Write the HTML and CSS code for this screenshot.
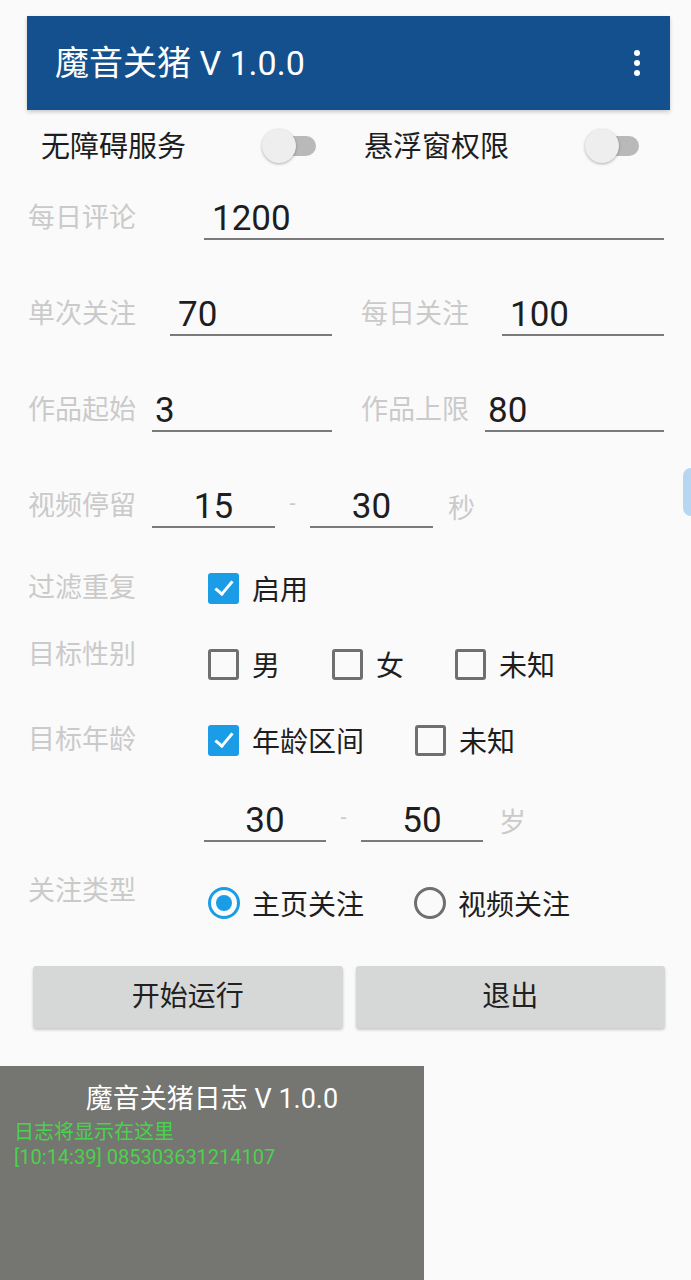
FILE: index.html
```html
<!DOCTYPE html>
<html lang="zh">

<head>
    <meta charset="UTF-8">
    <meta name="viewport" content="width=device-width, initial-scale=1.0">
    <title>魔音关猪</title>
    <link rel="stylesheet" href="styles.css">
</head>

<body>
    <div class="toolbar">
        <span class="title">魔音关猪 V 1.0.0</span>
        <span class="menu"><i></i><i></i><i></i></span>
    </div>

    <div class="switch-row">
        <span class="switch-label">无障碍服务</span>
        <span class="switch"><span class="thumb"></span></span>
        <span class="switch-label second">悬浮窗权限</span>
        <span class="switch"><span class="thumb"></span></span>
    </div>

    <div class="row row-comment">
        <span class="label w176">每日评论</span>
        <span class="field grow">1200</span>
    </div>

    <div class="row row-input">
        <span class="label w142">单次关注</span>
        <span class="field w162">70</span>
        <span class="label second w141">每日关注</span>
        <span class="field w162">100</span>
    </div>

    <div class="row row-input">
        <span class="label w124">作品起始</span>
        <span class="field w180 tight">3</span>
        <span class="label second w124">作品上限</span>
        <span class="field w179 tight">80</span>
    </div>

    <div class="row row-input">
        <span class="label w124">视频停留</span>
        <span class="field short center">15</span>
        <span class="dash">-</span>
        <span class="field short center">30</span>
        <span class="unit">秒</span>
    </div>

    <div class="row row-check r-filter">
        <span class="label w180">过滤重复</span>
        <span class="check-item"><span class="box checked"></span>启用</span>
    </div>

    <div class="row row-check r-gender">
        <span class="label w180 up">目标性别</span>
        <span class="check-item w124"><span class="box"></span>男</span>
        <span class="check-item w123"><span class="box"></span>女</span>
        <span class="check-item"><span class="box"></span>未知</span>
    </div>

    <div class="row row-check r-age">
        <span class="label w180">目标年龄</span>
        <span class="check-item w207"><span class="box checked"></span>年龄区间</span>
        <span class="check-item"><span class="box"></span>未知</span>
    </div>

    <div class="row r-range">
        <span class="field short center">30</span>
        <span class="dash">-</span>
        <span class="field short center">50</span>
        <span class="unit">岁</span>
    </div>

    <div class="row row-check r-type">
        <span class="label w180 up">关注类型</span>
        <span class="check-item w206"><span class="radio on"></span>主页关注</span>
        <span class="check-item"><span class="radio"></span>视频关注</span>
    </div>

    <div class="buttons">
        <div class="btn">开始运行</div>
        <div class="btn">退出</div>
    </div>

    <div class="log">
        <div class="log-title">魔音关猪日志 V 1.0.0</div>
        <div class="log-line">日志将显示在这里</div>
        <div class="log-line">[10:14:39] 085303631214107</div>
    </div>

    <!-- floating bubble at the screen edge -->
    <div class="bubble"></div>
</body>

</html>
```

FILE: styles.css
```css
body {
    margin: 0;
    padding: 0;
    width: 691px;
    height: 1280px;
    background-color: #fafafa;
    font-family: 'Roboto', 'Noto Sans CJK SC', sans-serif;
    color: #212121;
    position: relative;
    overflow: hidden;
}

/* Toolbar */
.toolbar {
    display: flex;
    align-items: center;
    justify-content: space-between;
    height: 94px;
    margin: 16px 21px 0 27px;
    padding: 0 30px 0 28px;
    background-color: #13508d;
    color: white;
    box-shadow: 0 2px 4px rgba(0, 0, 0, 0.2);
}

.title {
    font-size: 34px;
    line-height: 40px;
}

.menu {
    display: flex;
    flex-direction: column;
    gap: 4px;
}

.menu i {
    display: block;
    width: 6px;
    height: 6px;
    border-radius: 50%;
    background-color: white;
}

/* Switch row */
.switch-row {
    display: flex;
    align-items: center;
    height: 72px;
    padding-left: 41px;
}

.switch-label {
    width: 221px;
    margin-top: -4px;
    font-size: 29px;
    color: #1e1e1e;
}

.switch-label.second {
    margin-left: 48px;
}

.switch {
    position: relative;
    width: 54px;
    height: 20px;
}

.switch::before {
    content: "";
    position: absolute;
    left: 6px;
    right: 0;
    top: 0;
    height: 20px;
    border-radius: 10px;
    background-color: #b9b9b9;
}

.thumb {
    position: absolute;
    left: 0;
    top: -7px;
    width: 34px;
    height: 34px;
    border-radius: 50%;
    background-color: #eeeeee;
    box-shadow: 0 1px 3px rgba(0, 0, 0, 0.3);
}

/* Form rows */
.row {
    display: flex;
    align-items: center;
    padding-left: 28px;
}

.row-comment {
    height: 72px;
    margin-bottom: 12px;
}

.row-input {
    height: 96px;
}

.label {
    font-size: 27px;
    line-height: 39px;
    color: #cacaca;
    flex-shrink: 0;
}

.label.second {
    margin-left: 29px;
}

.label.up {
    align-self: flex-start;
}

.w124 { width: 124px; }
.w141 { width: 141px; }
.w142 { width: 142px; }
.w176 { width: 176px; }
.w180 { width: 180px; }

.field {
    box-sizing: border-box;
    height: 44px;
    padding-top: 3px;
    line-height: 39px;
    padding-left: 8px;
    border-bottom: 2px solid #7a7a7a;
    font-size: 35px;
    color: #1e1e1e;
}

.field.tight {
    padding-left: 3px;
}

.field.grow {
    width: 460px;
}

.w162 { width: 162px; }
.w179 { width: 179px; }
.w180 { width: 180px; }

.field.short {
    width: 123px;
}

.field.center {
    text-align: center;
    padding-left: 0;
}

.dash {
    width: 35px;
    text-align: center;
    font-size: 22px;
    color: #cacaca;
    margin-top: -6px;
}

.unit {
    margin-left: 15px;
    font-size: 27px;
    color: #cacaca;
}

/* Checkboxes and radios */
.r-filter {
    height: 68px;
}

.r-gender {
    height: 84px;
}

.r-gender .label.up {
    margin-top: 14px;
}

.r-age {
    height: 68px;
}

.check-item {
    display: flex;
    align-items: center;
    color: #1e1e1e;
    font-size: 28px;
}

.check-item.w123 { width: 123px; }
.check-item.w124 { width: 124px; }
.check-item.w206 { width: 206px; }
.check-item.w207 { width: 207px; }

.box {
    box-sizing: border-box;
    width: 31px;
    height: 31px;
    margin-right: 13px;
    border: 3px solid #6f6f6f;
    border-radius: 3px;
    position: relative;
}

.box.checked {
    background-color: #1a9de6;
    border-color: #1a9de6;
}

.box.checked::after {
    content: "";
    position: absolute;
    left: 8px;
    top: 1px;
    width: 7px;
    height: 15px;
    border-right: 3px solid white;
    border-bottom: 3px solid white;
    transform: rotate(40deg);
}

.radio {
    box-sizing: border-box;
    width: 32px;
    height: 32px;
    margin-right: 12px;
    border: 3px solid #6f6f6f;
    border-radius: 50%;
    position: relative;
}

.radio.on {
    border-color: #1a9de6;
}

.radio.on::after {
    content: "";
    position: absolute;
    left: 5px;
    top: 5px;
    width: 16px;
    height: 16px;
    border-radius: 50%;
    background-color: #1a9de6;
}

.r-range {
    height: 92px;
    padding-left: 204px;
}

.r-range .field.short {
    width: 122px;
}

.r-range .unit {
    margin-left: 16px;
}

.r-type {
    height: 74px;
}

.r-type .label.up {
    margin-top: 6px;
}

/* Buttons */
.buttons {
    display: flex;
    gap: 13px;
    padding: 0 26px 0 33px;
    margin-top: 26px;
}

.btn {
    flex: 1;
    height: 62px;
    line-height: 62px;
    text-align: center;
    font-size: 28px;
    color: #212121;
    background-color: #d6d7d7;
    border-radius: 3px;
    box-shadow: 0 2px 3px rgba(0, 0, 0, 0.2);
}

/* Log panel */
.log {
    width: 424px;
    height: 214px;
    margin-top: 38px;
    background-color: #757571;
    box-sizing: border-box;
    padding: 16px 0 0 14px;
}

.log-title {
    color: white;
    font-size: 27px;
    line-height: 34px;
    text-align: center;
    padding-right: 14px;
    margin-bottom: 4px;
}

.log-line {
    color: #4cd14c;
    font-size: 20px;
    line-height: 25px;
}

.bubble {
    position: absolute;
    left: 683px;
    top: 468px;
    width: 8px;
    height: 48px;
    border-radius: 24px 0 0 24px / 24px 0 0 24px;
    background-color: #b6d6f2;
}
```
